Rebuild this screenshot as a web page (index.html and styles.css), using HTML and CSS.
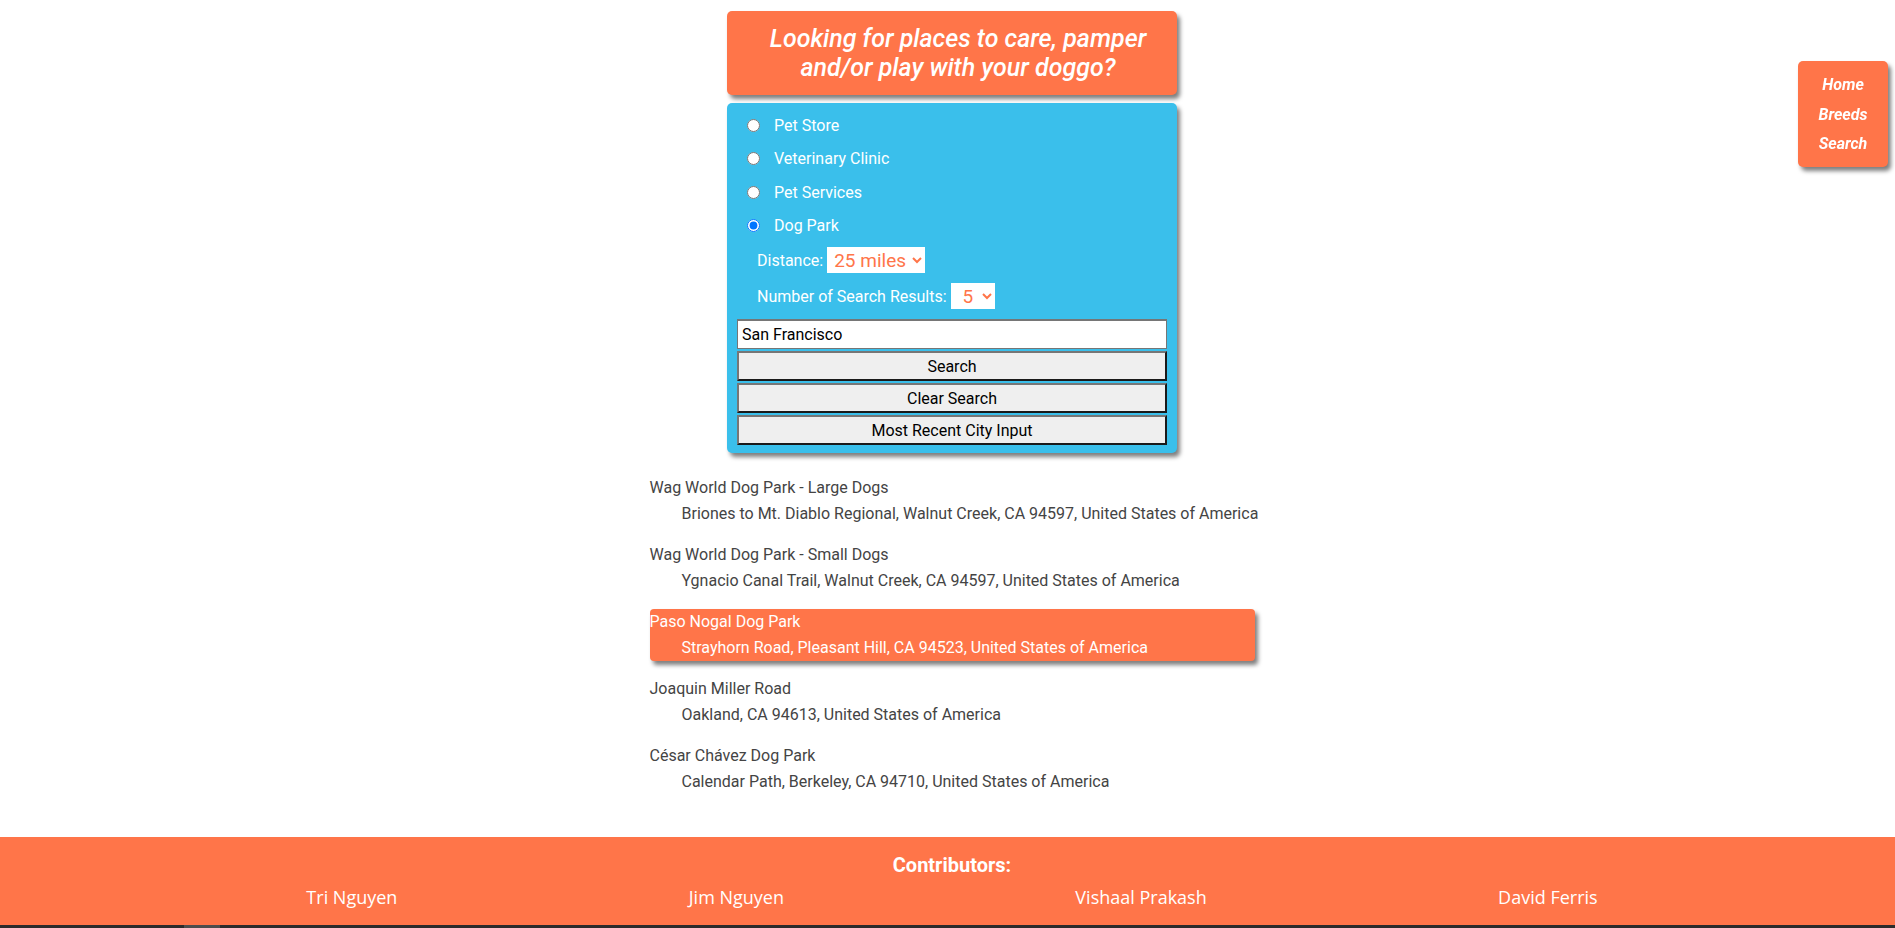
FILE: index.html
```html
<!DOCTYPE html>
<html lang="en">
<head>
<meta charset="utf-8">
<title>Doggo Places</title>
<link rel="stylesheet" href="styles.css">
</head>
<body>
<div class="page">
  <main class="main">
    <header class="hero">
      <h1 class="hero-title">Looking for places to care, pamper and/or play with your doggo?</h1>
    </header>
    <form class="search-card">
      <label class="radio-row"><input type="radio" name="type" class="radio"><span>Pet Store</span></label>
      <label class="radio-row"><input type="radio" name="type" class="radio"><span>Veterinary Clinic</span></label>
      <label class="radio-row"><input type="radio" name="type" class="radio"><span>Pet Services</span></label>
      <label class="radio-row"><input type="radio" name="type" class="radio" checked><span>Dog Park</span></label>
      <div class="field-row">
        <label class="field-label">Distance:</label>
        <select class="select select-distance"><option>25 miles</option></select>
      </div>
      <div class="field-row field-row-next">
        <label class="field-label">Number of Search Results:</label>
        <select class="select select-count"><option>5</option></select>
      </div>
      <input class="city-input" type="text" value="San Francisco">
      <button type="button" class="btn">Search</button>
      <button type="button" class="btn">Clear Search</button>
      <button type="button" class="btn">Most Recent City Input</button>
    </form>
    <ul class="results">
      <li class="result">
        <div class="result-name">Wag World Dog Park - Large Dogs</div>
        <div class="result-address">Briones to Mt. Diablo Regional, Walnut Creek, CA 94597, United States of America</div>
      </li>
      <li class="result">
        <div class="result-name">Wag World Dog Park - Small Dogs</div>
        <div class="result-address">Ygnacio Canal Trail, Walnut Creek, CA 94597, United States of America</div>
      </li>
      <li class="result result-active">
        <div class="result-name">Paso Nogal Dog Park</div>
        <div class="result-address">Strayhorn Road, Pleasant Hill, CA 94523, United States of America</div>
      </li>
      <li class="result">
        <div class="result-name">Joaquin Miller Road</div>
        <div class="result-address">Oakland, CA 94613, United States of America</div>
      </li>
      <li class="result">
        <div class="result-name">César Chávez Dog Park</div>
        <div class="result-address">Calendar Path, Berkeley, CA 94710, United States of America</div>
      </li>
    </ul>
  </main>
  <footer class="footer">
    <h2 class="footer-title">Contributors:</h2>
    <div class="contributors">
      <span class="contributor">Tri Nguyen</span>
      <span class="contributor">Jim Nguyen</span>
      <span class="contributor">Vishaal Prakash</span>
      <span class="contributor">David Ferris</span>
    </div>
  </footer>
  <div class="scrollbar"><span class="scroll-thumb"></span></div>
</div>
<nav class="side-nav">
  <a class="nav-link" href="#">Home</a>
  <a class="nav-link" href="#">Breeds</a>
  <a class="nav-link" href="#">Search</a>
</nav>
</body>
</html>
```
FILE: styles.css
```css
* { box-sizing: border-box; }

html { overflow: hidden; }

body {
  margin: 0;
  background: #ffffff;
  font-family: Roboto, "Liberation Sans", sans-serif;
}

.page {
  width: 1904px;
  min-height: 928px;
  display: flex;
  flex-direction: column;
}

.main {
  flex: 1;
  display: flex;
  flex-direction: column;
  align-items: center;
  padding-top: 11px;
}

.hero {
  width: 450px;
  height: 84px;
  background: #ff7549;
  border-radius: 5px;
  box-shadow: 3px 4px 4px rgba(0, 0, 0, 0.5);
  display: flex;
  align-items: center;
  justify-content: center;
  padding: 0 14px 0 26px;
}

.hero-title {
  margin: 0;
  color: #ffffff;
  font-style: italic;
  font-weight: 500;
  font-size: 25px;
  line-height: 29px;
  text-align: center;
}

.search-card {
  width: 450px;
  margin: 8px 0 0;
  background: #3abfeb;
  border-radius: 5px;
  box-shadow: 3px 4px 4px rgba(0, 0, 0, 0.5);
  padding: 6px 10px 8px;
  display: flex;
  flex-direction: column;
}

.radio-row {
  height: 33.3px;
  display: flex;
  align-items: center;
  color: #ffffff;
  font-size: 16px;
}

.radio {
  width: 13px;
  height: 13px;
  margin: 0 14px 0 10px;
}

.field-row {
  display: flex;
  align-items: center;
  height: 26px;
  margin-top: 5px;
  padding-left: 20px;
  color: #ffffff;
  font-size: 16px;
}

.field-row-next { margin-top: 10px; }

.field-label { margin-right: 4px; }

.select {
  height: 26px;
  border: none;
  border-radius: 0;
  background: #ffffff;
  color: #ff7549;
  font-family: Roboto, "Liberation Sans", sans-serif;
  font-size: 19px;
  padding: 0 0 0 3px;
  outline: none;
}

.select-distance { width: 98px; }

.select-count { width: 44px; padding-left: 8px; }

.city-input {
  height: 30px;
  margin-top: 10px;
  border: 1px solid #767676;
  border-top-width: 2px;
  padding: 0 4px;
  font-family: Roboto, "Liberation Sans", sans-serif;
  font-size: 16px;
  color: #000000;
  background: #ffffff;
}

.btn {
  height: 30px;
  margin-top: 2px;
  background: #efefef;
  border-width: 2px;
  border-style: solid;
  border-color: #767676 #1a1a1a #1a1a1a #767676;
  font-family: Roboto, "Liberation Sans", sans-serif;
  font-size: 16px;
  color: #000000;
  padding: 0;
}

.results {
  list-style: none;
  width: 605px;
  margin: 22px 0 0;
  padding: 0;
}

.result {
  color: #444444;
  font-size: 16px;
  line-height: 26px;
  margin-bottom: 15px;
  white-space: nowrap;
}

.result-address { padding-left: 32px; }

.result-active {
  background: #ff7549;
  color: #ffffff;
  border-radius: 4px;
  box-shadow: 3px 4px 4px rgba(0, 0, 0, 0.5);
}

.footer {
  height: 88px;
  background: #ff7549;
  color: #ffffff;
  padding-top: 16px;
}

.footer-title {
  margin: 0;
  text-align: center;
  font-family: Roboto, "Liberation Sans", sans-serif;
  font-weight: 700;
  font-size: 20px;
  line-height: 24px;
}

.contributors {
  margin-top: 8px;
  display: flex;
  justify-content: space-evenly;
  padding: 0 15px;
}

.contributor {
  font-family: "Open Sans", "DejaVu Sans", sans-serif;
  font-size: 18px;
  line-height: 24px;
}

.scrollbar {
  height: 3px;
  background: #2b2b2b;
  padding-left: 184px;
  display: flex;
}

.scroll-thumb {
  width: 36px;
  height: 3px;
  background: #4d4d4d;
}

.side-nav {
  position: fixed;
  top: 61px;
  right: 7px;
  width: 90px;
  height: 106px;
  background: #ff7549;
  border-radius: 5px;
  box-shadow: 3px 4px 4px rgba(0, 0, 0, 0.5);
  padding: 9px 0 8px;
  display: flex;
  flex-direction: column;
  align-items: center;
}

.nav-link {
  color: #ffffff;
  text-decoration: none;
  font-weight: 700;
  font-style: italic;
  font-size: 16px;
  line-height: 29.5px;
}
```
